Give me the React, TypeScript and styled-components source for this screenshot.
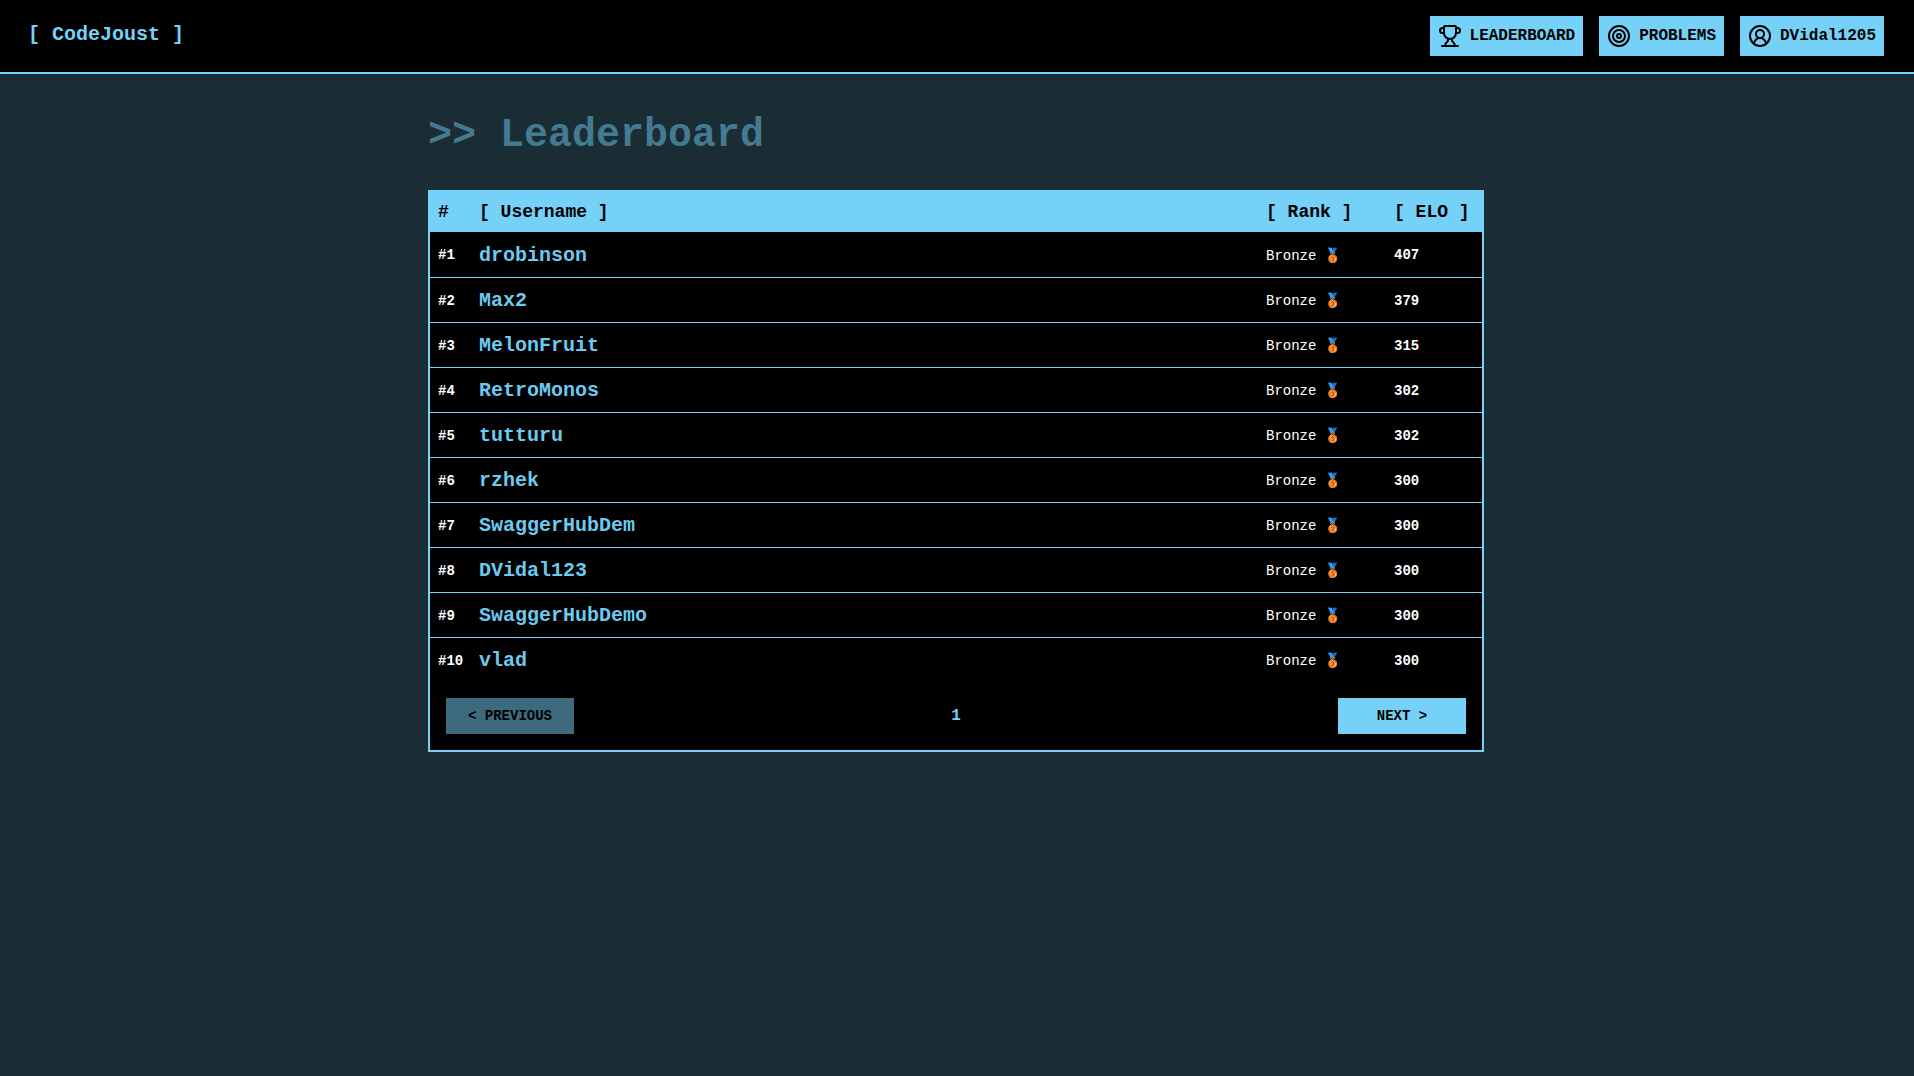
import React from 'react'
import styled, { createGlobalStyle } from 'styled-components'
import { Trophy, Target, CircleUserRound } from 'lucide-react'

const SKY = '#75d1f7'
const DIM = '#3d6b7d'

const players = [
  { name: 'drobinson', elo: 407 },
  { name: 'Max2', elo: 379 },
  { name: 'MelonFruit', elo: 315 },
  { name: 'RetroMonos', elo: 302 },
  { name: 'tutturu', elo: 302 },
  { name: 'rzhek', elo: 300 },
  { name: 'SwaggerHubDem', elo: 300 },
  { name: 'DVidal123', elo: 300 },
  { name: 'SwaggerHubDemo', elo: 300 },
  { name: 'vlad', elo: 300 },
]

const GlobalStyle = createGlobalStyle`
  html, body {
    margin: 0;
    min-height: 100vh;
    background: #1a2c34;
    font-family: "Liberation Mono", monospace;
    -webkit-font-smoothing: antialiased;
  }
  * { box-sizing: border-box; }
`

const Header = styled.header`
  height: 74px;
  background: #000;
  border-bottom: 2px solid ${SKY};
  display: flex;
  align-items: center;
  justify-content: space-between;
  padding: 0 30px 0 28px;
`

const Logo = styled.div`
  color: ${SKY};
  font-size: 20px;
  line-height: 28px;
  font-weight: 700;
  padding-bottom: 2px;
`

const Nav = styled.nav`
  display: flex;
  gap: 16px;
`

const NavButton = styled.a`
  height: 40px;
  display: flex;
  align-items: center;
  gap: 8px;
  padding: 0 8px;
  background: ${SKY};
  color: #000;
  font-size: 16px;
  font-weight: 700;
`

const Page = styled.div`
  display: flex;
  justify-content: center;
  padding-right: 2px;
`

const Main = styled.main`
  width: 1056px;
  padding-top: 32px;
`

const Title = styled.h1`
  margin: 0 0 24px;
  color: #437a92;
  font-size: 40px;
  line-height: 60px;
  font-weight: 700;
`

const Card = styled.section`
  background: #000;
  border: 2px solid ${SKY};
`

const Table = styled.table`
  width: 100%;
  border-collapse: collapse;
  table-layout: fixed;
`

const HeadRow = styled.tr`
  height: 40px;
  background: ${SKY};
`

const HeadCell = styled.th<{ $width?: number }>`
  width: ${p => (p.$width ? `${p.$width}px` : 'auto')};
  padding: 0 8px;
  color: #000;
  font-size: 18px;
  font-weight: 700;
  text-align: left;
  white-space: nowrap;
`

const Row = styled.tr`
  height: 45px;
  border-bottom: 1px solid ${SKY};
  &:last-child { border-bottom: 0; }
`

const Cell = styled.td`
  padding: 2px 8px 0;
  color: #fff;
  font-size: 14px;
  white-space: nowrap;
`

const Position = styled(Cell)`
  font-weight: 700;
`

const Username = styled(Cell)`
  color: #6ccaf0;
  font-size: 20px;
  font-weight: 700;
`

const Medal = styled.span`
  margin-left: 8px;
`

const Elo = styled(Cell)`
  font-weight: 700;
`

const Pager = styled.div`
  display: flex;
  align-items: center;
  justify-content: space-between;
  padding: 16px;
`

const PageButton = styled.button<{ $disabled?: boolean }>`
  width: 128px;
  height: 36px;
  border: 0;
  padding: 0;
  background: ${p => (p.$disabled ? DIM : SKY)};
  color: #000;
  font-family: inherit;
  font-size: 14px;
  font-weight: 700;
`

const PageNumber = styled.span`
  color: ${SKY};
  font-size: 16px;
  font-weight: 700;
`

export default function App(): React.ReactElement {
  return (
    <>
      <GlobalStyle />
      <Header>
        <Logo>[ CodeJoust ]</Logo>
        <Nav>
          <NavButton><Trophy size={24} />LEADERBOARD</NavButton>
          <NavButton><Target size={24} />PROBLEMS</NavButton>
          <NavButton><CircleUserRound size={24} />DVidal1205</NavButton>
        </Nav>
      </Header>
      <Page>
        <Main>
          <Title>&gt;&gt; Leaderboard</Title>
          <Card>
            <Table>
              <thead>
                <HeadRow>
                  <HeadCell $width={41}>#</HeadCell>
                  <HeadCell>[ Username ]</HeadCell>
                  <HeadCell $width={128}>[ Rank ]</HeadCell>
                  <HeadCell $width={96}>[ ELO ]</HeadCell>
                </HeadRow>
              </thead>
              <tbody>
                {players.map((player, index) => (
                  <Row key={player.name}>
                    <Position>#{index + 1}</Position>
                    <Username>{player.name}</Username>
                    <Cell>Bronze<Medal>🥉</Medal></Cell>
                    <Elo>{player.elo}</Elo>
                  </Row>
                ))}
              </tbody>
            </Table>
            <Pager>
              <PageButton $disabled>&lt; PREVIOUS</PageButton>
              <PageNumber>1</PageNumber>
              <PageButton>NEXT &gt;</PageButton>
            </Pager>
          </Card>
        </Main>
      </Page>
    </>
  )
}
